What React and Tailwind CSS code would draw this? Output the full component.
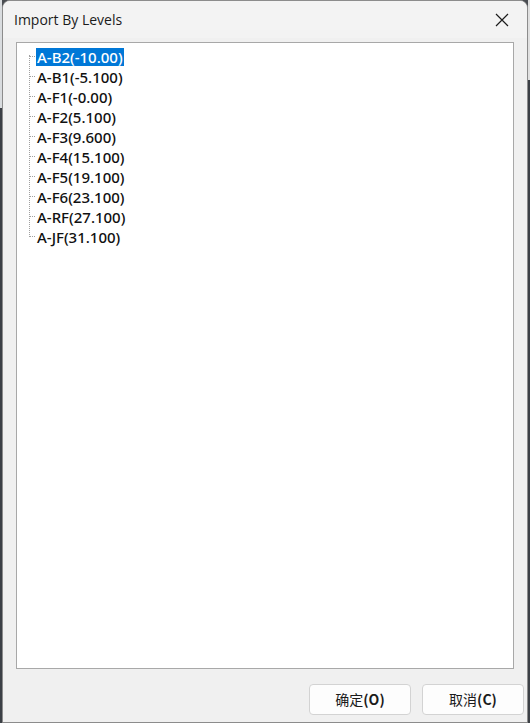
import React from "react";

const levels = [
  "A-B2(-10.00)",
  "A-B1(-5.100)",
  "A-F1(-0.00)",
  "A-F2(5.100)",
  "A-F3(9.600)",
  "A-F4(15.100)",
  "A-F5(19.100)",
  "A-F6(23.100)",
  "A-RF(27.100)",
  "A-JF(31.100)",
];

const App = () => {
  return (
    <div className="w-[530px] h-[723px] bg-[#4a4d52] flex flex-col overflow-hidden">
      <div className="flex flex-1">
        <div className="w-[2px] flex flex-col">
          <div className="h-[108px] bg-[#d9dcdf]" />
          <div className="flex-1 bg-[#3c4046]" />
        </div>
        <div className="flex-1 flex flex-col bg-[#f0f0f0] border border-[#8c8c8c] rounded-t-[8px] overflow-hidden">
          <div className="h-[37px] flex items-center justify-between pl-[11px] pr-[14px] bg-[#f3f3f3]">
            <span className="text-[14px] text-[#1b1b1b] font-['Open_Sans',sans-serif]">Import By Levels</span>
            <svg width="14" height="14" viewBox="0 0 14 14" className="mr-[4px]">
              <path d="M1 1 L13 13 M13 1 L1 13" stroke="#1b1b1b" strokeWidth="1.2" />
            </svg>
          </div>
          <div className="flex-1 flex flex-col px-[13px] pt-[4px] pb-[4px]">
            <div className="h-[627px] bg-white border border-[#a8a8a8] relative pl-[19px] pt-[4px]">
              <div className="absolute left-[12px] top-[12px] h-[182px] border-l border-dotted border-[#a0a0a0]" />
              {levels.map((name, i) => (
                <div key={name} className="h-[20px] flex items-center relative">
                  <div className="absolute left-[-7px] top-[9px] w-[6px] border-t border-dotted border-[#a0a0a0]" />
                  <span
                    className={
                      i === 0
                        ? "bg-[#0078d7] text-white px-[1px] leading-[18px] text-[15px] font-medium font-['Noto_Sans',sans-serif]"
                        : "text-[#111] px-[1px] leading-[18px] text-[15px] font-medium font-['Noto_Sans',sans-serif]"
                    }
                  >
                    {name}
                  </span>
                </div>
              ))}
            </div>
            <div className="flex justify-end gap-[11px] mt-[15px] mr-[-10px]">
              <button className="w-[102px] h-[31px] bg-[#fdfdfd] border border-[#d3d3d3] rounded-[4px] text-[14px] text-[#1b1b1b] font-['Noto_Sans_CJK_SC',sans-serif]">
                确定<span className="font-semibold">(O)</span>
              </button>
              <button className="w-[102px] h-[31px] bg-[#fdfdfd] border border-[#d3d3d3] rounded-[4px] text-[14px] text-[#1b1b1b] font-['Noto_Sans_CJK_SC',sans-serif]">
                取消<span className="font-semibold">(C)</span>
              </button>
            </div>
          </div>
        </div>
        <div className="w-[2px] flex flex-col">
          <div className="h-[80px] bg-[#e0e0e0]" />
          <div className="flex-1 bg-[#3c4046]" />
        </div>
      </div>
    </div>
  );
};

export default App;
